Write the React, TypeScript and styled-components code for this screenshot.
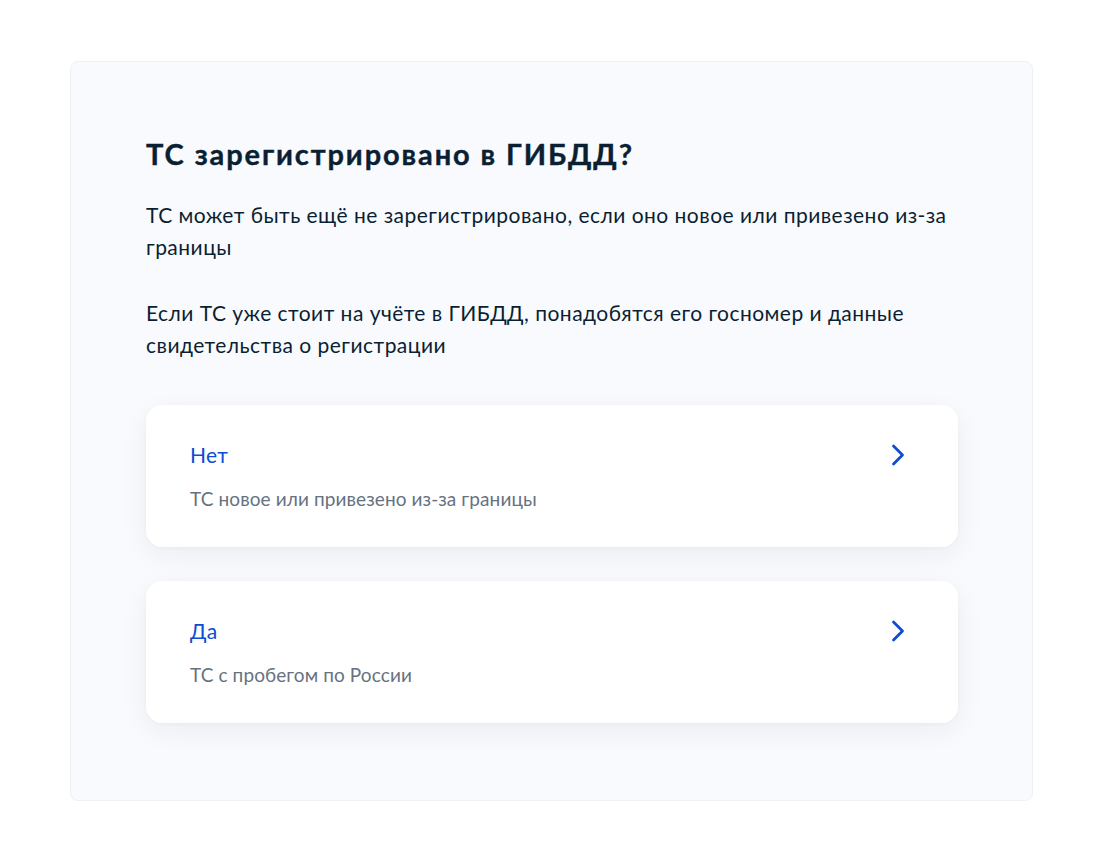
import React from 'react';
import styled, { createGlobalStyle } from 'styled-components';

const GlobalStyle = createGlobalStyle`
  html, body {
    margin: 0;
    padding: 0;
    background: #ffffff;
  }
  body {
    font-family: Lato, 'Noto Sans', sans-serif;
    color: #0b1f33;
  }
`;

const Page = styled.div`
  padding: 61px 70px 61px 70px;
`;

const Panel = styled.div`
  width: 963px;
  box-sizing: border-box;
  background: #f9fafd;
  border: 1px solid #eef0f4;
  border-radius: 8px;
  padding: 74px 74px 77px 75px;
`;

const Title = styled.h1`
  margin: 0;
  font-size: 29px;
  line-height: 36px;
  font-weight: 700;
  letter-spacing: 1.9px;
  -webkit-text-stroke: 0.4px #0b1f33;
  color: #0b1f33;
`;

const Paragraph = styled.p<{ $gap: number }>`
  margin: ${p => p.$gap}px 0 0;
  font-size: 21px;
  line-height: 32px;
  letter-spacing: 0.47px;
  color: #0b1f33;
`;

const Options = styled.div`
  margin-top: 44px;
  display: flex;
  flex-direction: column;
  gap: 34px;
`;

const Card = styled.button`
  all: unset;
  cursor: pointer;
  display: flex;
  align-items: flex-start;
  justify-content: space-between;
  background: #ffffff;
  border-radius: 16px;
  padding: 36px 44px 36px 44px;
  box-shadow: 0 1px 4px rgba(11, 31, 51, 0.03), 0 8px 28px rgba(11, 31, 51, 0.06);
`;

const CardText = styled.div`
  display: flex;
  flex-direction: column;
  gap: 18px;
`;

const CardTitle = styled.span`
  font-size: 21px;
  line-height: 28px;
  letter-spacing: 0.3px;
  color: #0d4cd3;
`;

const CardHint = styled.span`
  font-size: 19px;
  line-height: 24px;
  letter-spacing: 0.1px;
  color: #66727f;
`;

const Chevron = styled.svg`
  width: 24px;
  height: 24px;
  margin-top: 2px;
  margin-right: 2px;
  flex-shrink: 0;
`;

type Option = {
  title: string;
  hint: string;
};

const options: Option[] = [
  { title: 'Нет', hint: 'ТС новое или привезено из-за границы' },
  { title: 'Да', hint: 'ТС с пробегом по России' },
];

const App = () => (
  <Page>
    <GlobalStyle />
    <Panel>
      <Title>ТС зарегистрировано в ГИБДД?</Title>
      <Paragraph $gap={27}>
        ТС может быть ещё не зарегистрировано, если оно новое или привезено из-за границы
      </Paragraph>
      <Paragraph $gap={34}>
        Если ТС уже стоит на учёте в ГИБДД, понадобятся его госномер и данные свидетельства о
        регистрации
      </Paragraph>
      <Options>
        {options.map(opt => (
          <Card key={opt.title}>
            <CardText>
              <CardTitle>{opt.title}</CardTitle>
              <CardHint>{opt.hint}</CardHint>
            </CardText>
            <Chevron viewBox="0 0 24 24" fill="none">
              <path
                d="M5.5 3l9 9-9 9"
                stroke="#0d4cd3"
                strokeWidth="2.8"
                strokeLinecap="round"
                strokeLinejoin="round"
              />
            </Chevron>
          </Card>
        ))}
      </Options>
    </Panel>
  </Page>
);

export default App;
